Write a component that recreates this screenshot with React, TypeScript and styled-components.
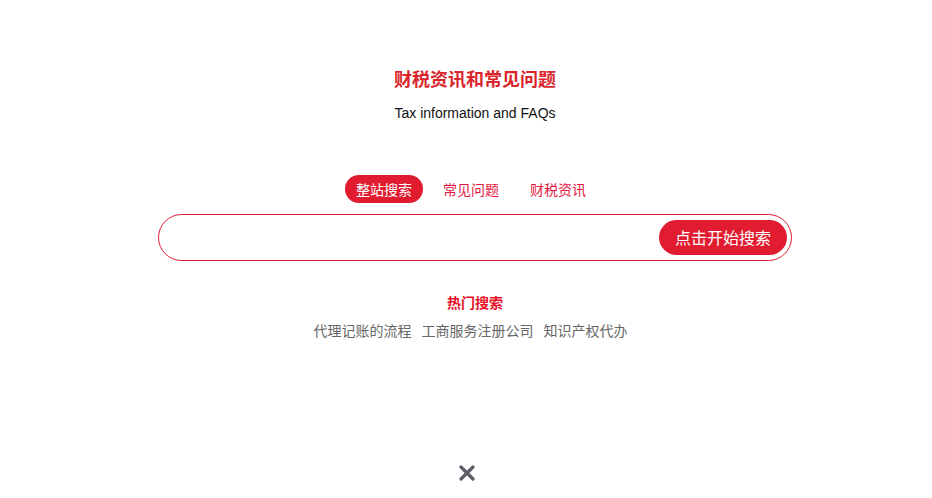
import { useState } from "react";
import styled, { createGlobalStyle } from "styled-components";

const GlobalStyle = createGlobalStyle`
  html, body {
    margin: 0;
    padding: 0;
    background: #fff;
  }
  body {
    font-family: "Liberation Sans", "Noto Sans CJK SC", sans-serif;
  }
`;

const Page = styled.div`
  display: flex;
  flex-direction: column;
  align-items: center;
  width: 932px;
  height: 498px;
  overflow: hidden;
`;

const Content = styled.div`
  display: flex;
  flex-direction: column;
  align-items: center;
  align-self: stretch;
  padding-left: 18px;
`;

const Title = styled.h2`
  margin: 66px 0 0;
  font-family: "Noto Sans CJK SC", sans-serif;
  font-size: 18px;
  line-height: 24px;
  font-weight: 700;
  color: #d9262c;
`;

const SubTitle = styled.p`
  margin: 13px 0 0;
  font-family: "Liberation Sans", Arial, sans-serif;
  font-size: 14px;
  line-height: 20px;
  color: #111;
`;

const Tabs = styled.div`
  display: flex;
  gap: 9px;
  margin: 52px 8px 0 0;
`;

const Tab = styled.button<{ $active?: boolean }>`
  height: 28px;
  padding: 0 11px;
  border: 0;
  border-radius: 14px;
  font-family: "Noto Sans CJK SC", sans-serif;
  font-size: 14px;
  line-height: 28px;
  cursor: pointer;
  background: ${({ $active }) => ($active ? "#e21c30" : "transparent")};
  color: ${({ $active }) => ($active ? "#fff" : "#e5173f")};
`;

const SearchBox = styled.form`
  display: flex;
  align-items: center;
  box-sizing: border-box;
  width: 634px;
  height: 47px;
  margin-top: 11px;
  padding: 0 4px 0 20px;
  border: 1px solid #e21c30;
  border-radius: 24px;
`;

const SearchInput = styled.input`
  flex: 1;
  min-width: 0;
  height: 100%;
  border: 0;
  outline: none;
  background: transparent;
  font-family: "Noto Sans CJK SC", sans-serif;
  font-size: 14px;
  color: #333;
`;

const SearchButton = styled.button`
  height: 35px;
  padding: 0 16px;
  border: 0;
  border-radius: 18px;
  background: #e21c30;
  color: #fff;
  font-family: "Noto Sans CJK SC", sans-serif;
  font-size: 16px;
  line-height: 35px;
  cursor: pointer;
`;

const HotTitle = styled.div`
  margin-top: 31px;
  font-family: "Noto Sans CJK SC", sans-serif;
  font-size: 14px;
  line-height: 20px;
  font-weight: 700;
  color: #e60f26;
`;

const HotList = styled.div`
  display: flex;
  gap: 10px;
  margin: 8px 9px 0 0;
`;

const HotLink = styled.a`
  font-family: "Noto Sans CJK SC", sans-serif;
  font-size: 14px;
  line-height: 20px;
  color: #666;
  text-decoration: none;
  cursor: pointer;
`;

const CloseButton = styled.button`
  display: flex;
  margin-top: 125px;
  margin-left: 2px;
  padding: 0;
  border: 0;
  background: none;
  cursor: pointer;
`;

const tabs = ["整站搜索", "常见问题", "财税资讯"];
const hot = ["代理记账的流程", "工商服务注册公司", "知识产权代办"];

export default function App() {
  const [active, setActive] = useState(0);
  return (
    <>
      <GlobalStyle />
      <Page>
        <Content>
          <Title>财税资讯和常见问题</Title>
          <SubTitle>Tax information and FAQs</SubTitle>
          <Tabs>
            {tabs.map((t, i) => (
              <Tab key={t} $active={i === active} onClick={() => setActive(i)}>
                {t}
              </Tab>
            ))}
          </Tabs>
          <SearchBox onSubmit={(e) => e.preventDefault()}>
            <SearchInput />
            <SearchButton type="submit">点击开始搜索</SearchButton>
          </SearchBox>
          <HotTitle>热门搜索</HotTitle>
          <HotList>
            {hot.map((h) => (
              <HotLink key={h}>{h}</HotLink>
            ))}
          </HotList>
        </Content>
        <CloseButton aria-label="close">
          <svg width="16" height="16" viewBox="0 0 16 16">
            <path
              d="M2 2 L14 14 M14 2 L2 14"
              stroke="#5a5c66"
              strokeWidth="3.2"
              strokeLinecap="round"
            />
          </svg>
        </CloseButton>
      </Page>
    </>
  );
}
